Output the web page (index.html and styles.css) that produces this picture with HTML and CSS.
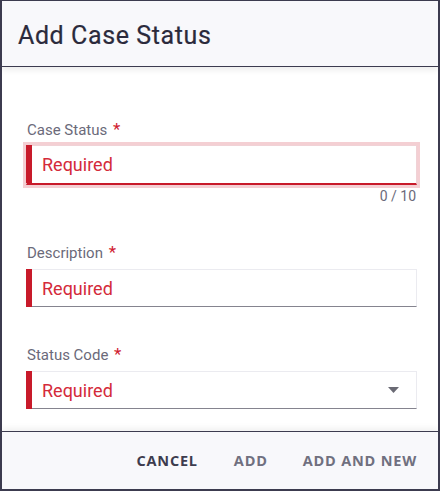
FILE: index.html
```html
<!DOCTYPE html>
<html>
<head>
<meta charset="utf-8">
<link rel="stylesheet" href="styles.css">
</head>
<body>
<div class="dialog">
  <header class="dialog-header">
    <h1 class="title">Add Case Status</h1>
  </header>
  <main class="dialog-body">
    <div class="field field-first">
      <label class="label">Case Status <span class="req">*</span></label>
      <div class="input input-focus">
        <span class="bar"></span>
        <span class="value">Required</span>
      </div>
      <div class="counter">0 / 10</div>
    </div>
    <div class="field field-desc">
      <label class="label">Description <span class="req">*</span></label>
      <div class="input">
        <span class="bar"></span>
        <span class="value">Required</span>
      </div>
    </div>
    <div class="field field-code">
      <label class="label">Status Code <span class="req">*</span></label>
      <div class="input">
        <span class="bar"></span>
        <span class="value">Required</span>
        <svg class="caret" width="11" height="6" viewBox="0 0 11 6"><path d="M0 0 H11 L5.5 6 Z" fill="#6a6a74"/></svg>
      </div>
    </div>
  </main>
  <footer class="dialog-footer">
    <button class="btn btn-cancel">CANCEL</button>
    <button class="btn btn-disabled">ADD</button>
    <button class="btn btn-disabled">ADD AND NEW</button>
  </footer>
</div>
</body>
</html>
```
FILE: styles.css
```css
* { box-sizing: border-box; }
html, body { margin: 0; padding: 0; background: #fff; }
body { font-family: Roboto, "Liberation Sans", sans-serif; }

.dialog {
  width: 440px;
  height: 491px;
  border-top: 1px solid #3c3b4f;
  border-left: 2px solid #3c3b4f;
  border-right: 2px solid #3c3b4f;
  border-bottom: 2px solid #3c3b4f;
  display: flex;
  flex-direction: column;
  background: #fff;
  overflow: hidden;
}

.dialog-header {
  height: 66px;
  background: #f8f8fb;
  border-bottom: 1px solid #3c3b4f;
  box-shadow: 0 3px 6px rgba(0,0,0,0.08);
  padding: 0 16px;
  display: flex;
  align-items: center;
  position: relative;
  z-index: 1;
}

.title {
  margin: 0;
  font-family: Roboto, "Liberation Sans", sans-serif;
  font-weight: 400;
  font-size: 25px;
  color: #2b2a3c;
  letter-spacing: 0.6px;
  padding-top: 4px;
  -webkit-text-stroke: 0.2px #2b2a3c;
}

.dialog-body {
  flex: 1;
  padding: 55px 21px 0 24px;
}

.field { display: flex; flex-direction: column; }
.field-desc { margin-top: 41px; }
.field-code { margin-top: 40px; }

.label {
  font-size: 15px;
  line-height: 16px;
  color: #6b6a7a;
  margin-bottom: 8px;
  margin-left: 1px;
}
.req { color: #d0202f; font-size: 17px; line-height: 14px; margin-left: 2px; }

.input {
  height: 38px;
  background: #fff;
  border: 1px solid #ebebf0;
  border-bottom: 1px solid #85848f;
  display: flex;
  align-items: center;
  position: relative;
}
.input-focus {
  height: 40px;
  border: 1px solid #f0d2d6;
  border-bottom: 2px solid #c81a2a;
  box-shadow: 0 0 0 3px #f4cfd3;
  margin-top: -1px;
}

.bar {
  align-self: stretch;
  width: 6px;
  background: #c81a2a;
  margin: -1px 0 -1px -1px;
}
.input-focus .bar { margin-bottom: 0; }

.value {
  margin-left: 10px;
  font-size: 18px;
  color: #d42a3a;
  flex: 1;
}

.caret { margin-right: 17px; }

.counter {
  text-align: right;
  font-size: 14px;
  line-height: 16px;
  color: #6b6a7a;
  margin-top: 3px;
  margin-right: 1px;
}

.dialog-footer {
  height: 58px;
  background: #f8f8fb;
  border-top: 1px solid #3c3b4f;
  box-shadow: 0 -3px 6px rgba(0,0,0,0.06);
  display: flex;
  justify-content: flex-end;
  align-items: center;
  padding-right: 21px;
  gap: 0;
}

.btn {
  font-family: "Open Sans", "Liberation Sans", sans-serif;
  font-weight: 700;
  font-size: 14.5px;
  letter-spacing: 0.8px;
  background: none;
  border: 0;
  padding: 0;
  cursor: pointer;
}
.btn-cancel { color: #3d3c4e; margin-right: 36px; }
.btn-disabled { color: #70707f; }
.btn-disabled + .btn-disabled { margin-left: 35px; }
```
